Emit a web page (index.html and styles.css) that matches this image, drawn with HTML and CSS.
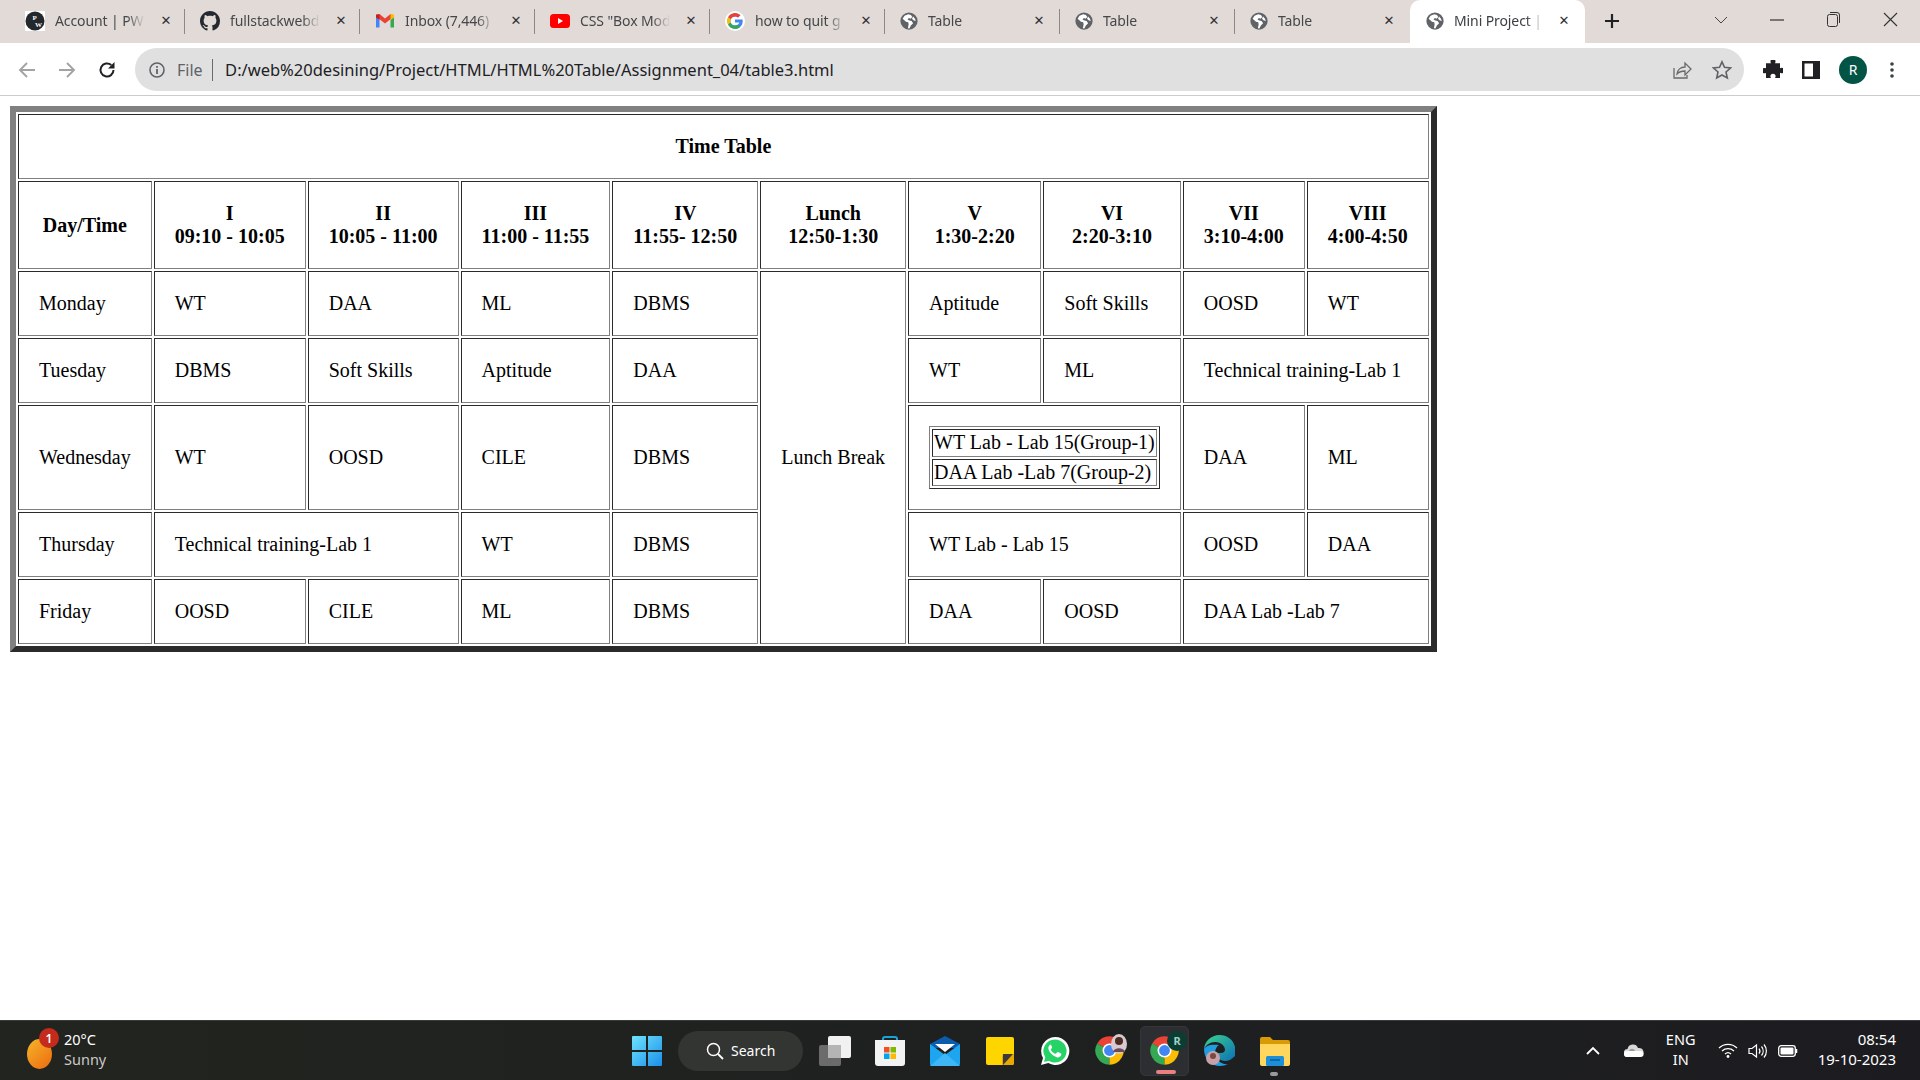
FILE: index.html
```html
<!DOCTYPE html>
<html lang="en">
<head>
<meta charset="utf-8">
<title>Mini Project</title>
<link rel="stylesheet" href="styles.css">
</head>
<body>
<svg class="defs" width="0" height="0">
  <symbol id="globe" viewBox="0 0 24 24">
    <circle cx="12" cy="12" r="11.5" fill="#5f6368"/>
    <path d="M11 3 6 5 3.5 9 8 13l3 .5.5 3-1 5 2 .5 2-4 3-3-2-3-4-1-1.500-1.500 2-1.500 2 1 2.500-2.500-2-2.500zM17.500 6l2.500 3 1 3-3-1-2-2z" fill="#fff"/>
  </symbol>
  <symbol id="chrome" viewBox="0 0 24 24">
    <path d="M12 12 2.470 6.500A11 11 0 0 1 21.530 6.500z" fill="#ea4335"/>
    <path d="M12 12 2.470 6.500A11 11 0 0 0 12 23z" fill="#34a853"/>
    <path d="M12 12 21.530 6.500A11 11 0 0 1 12 23z" fill="#fbbc04"/>
    <circle cx="12" cy="12" r="5.400" fill="#fff"/>
    <circle cx="12" cy="12" r="4.200" fill="#4285f4"/>
  </symbol>
</svg>

<div class="app">
  <header class="tabstrip">
    <div class="tab">
      <svg class="fav" width="20" height="20" viewBox="0 0 20 20"><rect width="20" height="20" fill="#fff"/><circle cx="10" cy="10" r="9.500" fill="#23282d"/><text x="7.500" y="9" class="pw">P</text><text x="10" y="16" class="pw">W</text></svg>
      <span class="title">Account | PW</span><span class="x">✕</span>
    </div>
    <div class="tab">
      <svg class="fav" width="20" height="20" viewBox="0 0 16 16"><path fill="#24292f" d="M8 0C3.580 0 0 3.580 0 8c0 3.540 2.290 6.530 5.470 7.590.4.070.55-.17.55-.38 0-.19-.01-.82-.01-1.490-2.010.37-2.530-.49-2.690-.94-.09-.23-.48-.94-.82-1.130-.28-.15-.68-.52-.01-.53.63-.01 1.080.58 1.230.82.72 1.210 1.870.87 2.330.66.07-.52.28-.87.51-1.070-1.780-.2-3.640-.89-3.640-3.950 0-.87.31-1.590.82-2.150-.08-.2-.36-1.020.08-2.120 0 0 .67-.21 2.200.82.64-.18 1.320-.27 2-.27.68 0 1.360.09 2 .27 1.530-1.040 2.200-.82 2.200-.82.44 1.100.16 1.920.08 2.120.51.56.82 1.270.82 2.150 0 3.070-1.870 3.750-3.650 3.950.29.25.54.73.54 1.480 0 1.070-.01 1.930-.01 2.200 0 .21.15.46.55.38A8.013 8.013 0 0 0 16 8c0-4.420-3.580-8-8-8z"/></svg>
      <span class="title">fullstackwebd</span><span class="x">✕</span>
    </div>
    <div class="tab">
      <svg class="fav" width="20" height="20" viewBox="0 0 20 20"><path d="M1 5v11.500h3.500V9z" fill="#4285f4"/><path d="M19 5v11.500h-3.500V9z" fill="#34a853"/><path d="M1 5.500 4.500 3 10 7.500 15.500 3 19 5.500 10 12.500z" fill="#ea4335"/><path d="M15.500 3 19 3.500V6.500L15.500 9z" fill="#fbbc04"/><path d="M1 3.500 4.500 3v6L1 6.500z" fill="#c5221f"/></svg>
      <span class="title">Inbox (7,446)</span><span class="x">✕</span>
    </div>
    <div class="tab">
      <svg class="fav" width="20" height="20" viewBox="0 0 20 20"><rect y="3" width="20" height="14" rx="3.500" fill="#f00"/><path d="M8 7v6l5-3z" fill="#fff"/></svg>
      <span class="title">CSS "Box Mod</span><span class="x">✕</span>
    </div>
    <div class="tab">
      <svg class="fav" width="20" height="20" viewBox="0 0 20 20"><circle cx="10" cy="10" r="10" fill="#fff"/><path d="M10 8.400v3.200h4.400c-.3 1.500-1.900 3-4.400 3a4.600 4.600 0 0 1 0-9.200c1.300 0 2.300.5 3 1.200l2.400-2.400A7.800 7.800 0 1 0 10 17.800c4.500 0 7.700-3.200 7.700-7.800l-.1-1.600z" fill="#4285f4"/><path d="M3.100 6.300 5.800 8.300A4.600 4.600 0 0 1 10 5.400c1.300 0 2.300.5 3 1.200l2.400-2.400A7.800 7.800 0 0 0 3.100 6.300z" fill="#ea4335"/><path d="M3 13.600 5.700 11.700A4.600 4.600 0 0 1 5.800 8.300L3.100 6.300a7.800 7.800 0 0 0-.1 7.300z" fill="#fbbc04"/><path d="M10 17.800c2.100 0 3.900-.7 5.200-1.900l-2.600-2.100c-.7.500-1.600.8-2.600.8a4.600 4.600 0 0 1-4.300-2.900L3 13.600a7.800 7.800 0 0 0 7 4.200z" fill="#34a853"/></svg>
      <span class="title">how to quit g</span><span class="x">✕</span>
    </div>
    <div class="tab"><svg class="fav" width="18" height="18"><use href="#globe"/></svg><span class="title">Table</span><span class="x">✕</span></div>
    <div class="tab"><svg class="fav" width="18" height="18"><use href="#globe"/></svg><span class="title">Table</span><span class="x">✕</span></div>
    <div class="tab tab-last"><svg class="fav" width="18" height="18"><use href="#globe"/></svg><span class="title">Table</span><span class="x">✕</span></div>
    <div class="tab tab-active"><svg class="fav" width="18" height="18"><use href="#globe"/></svg><span class="title">Mini Project |</span><span class="x">✕</span></div>
    <svg class="newtab" width="16" height="16" viewBox="0 0 16 16"><path d="M8 1v14M1 8h14" stroke="#202124" stroke-width="2.200"/></svg>
    <div class="winctl">
      <svg width="14" height="8" viewBox="0 0 14 8"><path d="M1 1l6 6 6-6" fill="none" stroke="#444" stroke-width="1"/></svg>
      <svg width="14" height="2" viewBox="0 0 14 2"><path d="M0 1h14" stroke="#333" stroke-width="1.200"/></svg>
      <svg width="13" height="15" viewBox="0 0 13 15"><rect x=".5" y="2.500" width="10" height="12" rx="2" fill="none" stroke="#333"/><path d="M3 .5h7a2.500 2.500 0 0 1 2.500 2.500v8" fill="none" stroke="#333"/></svg>
      <svg width="15" height="15" viewBox="0 0 15 15"><path d="M1 1l13 13M14 1 1 14" stroke="#333" stroke-width="1.100"/></svg>
    </div>
  </header>

  <nav class="toolbar">
    <div class="navbtns">
      <svg width="18" height="16" viewBox="0 0 18 16"><path d="M9 1 2 8l7 7M2 8h15" fill="none" stroke="#a3a3a3" stroke-width="1.900"/></svg>
      <svg width="18" height="16" viewBox="0 0 18 16"><path d="M9 1l7 7-7 7M16 8H1" fill="none" stroke="#a3a3a3" stroke-width="1.900"/></svg>
      <svg width="18" height="18" viewBox="0 0 18 18"><path d="M15.500 9A6.500 6.500 0 1 1 13.300 4.100" fill="none" stroke="#202124" stroke-width="2"/><path d="M16.500 1v6.500H10z" fill="#202124"/></svg>
    </div>
    <div class="omnibox">
      <svg class="info" width="16" height="16" viewBox="0 0 16 16"><circle cx="8" cy="8" r="7" fill="none" stroke="#5f6368" stroke-width="1.600"/><path d="M8 7v5M8 4v1.800" stroke="#5f6368" stroke-width="1.800"/></svg>
      <span class="scheme">File</span>
      <span class="url">D:/web%20desining/Project/HTML/HTML%20Table/Assignment_04/table3.html</span>
      <svg class="omni-ic" width="20" height="20" viewBox="0 0 20 20"><path d="M2 8v10h13v-3" fill="none" stroke="#6a6a6a" stroke-width="1.300"/><path d="M5 14c.5-4 3.500-7 8-7V3l6 6-6 6v-4c-3.500 0-6 1-8 3z" fill="none" stroke="#6a6a6a" stroke-width="1.300"/></svg>
      <svg class="omni-ic" width="20" height="20" viewBox="0 0 20 20"><path d="M10 1.800l2.500 5.500 6 .7-4.500 4 1.300 6L10 15l-5.300 3 1.300-6-4.500-4 6-.7z" fill="none" stroke="#5f6368" stroke-width="1.600"/></svg>
    </div>
    <div class="toolbtns">
      <svg width="20" height="20" viewBox="0 0 20 20"><path d="M7.500 1.500a2.500 2.500 0 0 1 5 0c0 .8-.3 1.300-.5 1.800h5v5c.5-.3 1-.5 1.500-.5a2.700 2.700 0 0 1 0 5.400c-.5 0-1-.2-1.500-.5v5.300h-5c.3-.6.600-1 .6-1.700a2.600 2.600 0 0 0-5.200 0c0 .7.300 1.100.6 1.700H3v-5c-.4.200-.8.300-1.300.3a2.700 2.700 0 0 1 0-5.400c.5 0 .9.100 1.300.300V3.300h5c-.3-.5-.5-1-.5-1.800z" fill="#202124"/></svg>
      <svg width="18" height="18" viewBox="0 0 18 18"><path fill-rule="evenodd" d="M0 0h18v18H0zM2.500 2.500v13H11v-13z" fill="#202124"/></svg>
      <span class="avatar">R</span>
      <svg class="dots" width="4" height="16" viewBox="0 0 4 16"><circle cx="2" cy="2" r="1.800" fill="#3c4043"/><circle cx="2" cy="8" r="1.800" fill="#3c4043"/><circle cx="2" cy="14" r="1.800" fill="#3c4043"/></svg>
    </div>
  </nav>

  <main class="page">
    <table class="timetable">
      <tr><th class="cell" colspan="10">Time Table</th></tr>
      <tr>
        <th class="cell">Day/Time</th>
        <th class="cell">I<br>09:10 - 10:05</th>
        <th class="cell">II<br>10:05 - 11:00</th>
        <th class="cell">III<br>11:00 - 11:55</th>
        <th class="cell">IV<br>11:55- 12:50</th>
        <th class="cell">Lunch<br>12:50-1:30</th>
        <th class="cell">V<br>1:30-2:20</th>
        <th class="cell">VI<br>2:20-3:10</th>
        <th class="cell">VII<br>3:10-4:00</th>
        <th class="cell">VIII<br>4:00-4:50</th>
      </tr>
      <tr>
        <td class="cell">Monday</td><td class="cell">WT</td><td class="cell">DAA</td><td class="cell">ML</td><td class="cell">DBMS</td>
        <td class="cell" rowspan="5">Lunch Break</td>
        <td class="cell">Aptitude</td><td class="cell">Soft Skills</td><td class="cell">OOSD</td><td class="cell">WT</td>
      </tr>
      <tr>
        <td class="cell">Tuesday</td><td class="cell">DBMS</td><td class="cell">Soft Skills</td><td class="cell">Aptitude</td><td class="cell">DAA</td>
        <td class="cell">WT</td><td class="cell">ML</td><td class="cell" colspan="2">Technical training-Lab 1</td>
      </tr>
      <tr>
        <td class="cell">Wednesday</td><td class="cell">WT</td><td class="cell">OOSD</td><td class="cell">CILE</td><td class="cell">DBMS</td>
        <td class="cell" colspan="2">
          <table class="inner">
            <tr><td class="inner-cell inner-first">WT Lab - Lab 15(Group-1)</td></tr>
            <tr><td class="inner-cell">DAA Lab -Lab 7(Group-2)</td></tr>
          </table>
        </td>
        <td class="cell">DAA</td><td class="cell">ML</td>
      </tr>
      <tr>
        <td class="cell">Thursday</td><td class="cell" colspan="2">Technical training-Lab 1</td><td class="cell">WT</td><td class="cell">DBMS</td>
        <td class="cell" colspan="2">WT Lab - Lab 15</td><td class="cell">OOSD</td><td class="cell">DAA</td>
      </tr>
      <tr>
        <td class="cell">Friday</td><td class="cell">OOSD</td><td class="cell">CILE</td><td class="cell">ML</td><td class="cell">DBMS</td>
        <td class="cell">DAA</td><td class="cell">OOSD</td><td class="cell" colspan="2">DAA Lab -Lab 7</td>
      </tr>
    </table>
  </main>

  <footer class="taskbar">
    <div class="weather">
      <span class="sun"></span><span class="badge">1</span>
      <div class="wtext"><span class="temp">20°C</span><span class="cond">Sunny</span></div>
    </div>
    <div class="apps">
      <span class="slot slot-win"><svg width="30" height="30" viewBox="0 0 30 30"><defs><linearGradient id="wg" x1="0" y1="0" x2="1" y2="1"><stop offset="0" stop-color="#6fe3fb"/><stop offset="1" stop-color="#1a8fea"/></linearGradient></defs><path d="M0 1a1 1 0 0 1 1-1h13v14H0zM16 0h13a1 1 0 0 1 1 1v13H16zM0 16h14v14H1a1 1 0 0 1-1-1zM16 16h14v13a1 1 0 0 1-1 1H16z" fill="url(#wg)"/></svg></span>
      <span class="search"><svg width="18" height="18" viewBox="0 0 18 18"><circle cx="7.500" cy="7.500" r="6" fill="none" stroke="#fff" stroke-width="1.500"/><path d="M12 12l5 5" stroke="#fff" stroke-width="1.800"/></svg>Search</span>
      <span class="slot"><svg width="32" height="30" viewBox="0 0 32 30"><rect y="9" width="22" height="21" rx="2" fill="#6b6b6b"/><rect x="9" width="23" height="22" rx="2" fill="#f1f1f1"/><rect x="9" y="9" width="13" height="13" fill="#b5b5b5"/></svg></span>
      <span class="slot"><svg width="30" height="30" viewBox="0 0 30 30"><path d="M8 5V3a2 2 0 0 1 2-2h10a2 2 0 0 1 2 2v2" fill="none" stroke="#19a3dc" stroke-width="2"/><path d="M0 4h30v23a3 3 0 0 1-3 3H3a3 3 0 0 1-3-3z" fill="#f3f3f3"/><rect x="9" y="11" width="5.500" height="5.500" fill="#f25022"/><rect x="15.500" y="11" width="5.500" height="5.500" fill="#7fba00"/><rect x="9" y="17.500" width="5.500" height="5.500" fill="#00a4ef"/><rect x="15.500" y="17.500" width="5.500" height="5.500" fill="#ffb900"/></svg></span>
      <span class="slot"><svg width="30" height="30" viewBox="0 0 30 30"><path d="M0 8 15 0l15 8v4H0z" fill="#0b5cad"/><path d="M0 8v20a2 2 0 0 0 2 2h26a2 2 0 0 0 2-2V8L15 19z" fill="#1ea5ef"/><path d="M5 8h20L15 16z" fill="#fff"/><path d="M0 30 15 17l15 13z" fill="#3fb6f5"/></svg></span>
      <span class="slot"><svg width="28" height="28" viewBox="0 0 28 28"><path d="M2 0h24a2 2 0 0 1 2 2v24a2 2 0 0 1-2 2H2a2 2 0 0 1-2-2V2a2 2 0 0 1 2-2z" fill="#ffd500"/><path d="M28 17H19a3 3 0 0 0-3 3v8h10a2 2 0 0 0 2-2z" fill="#e8a800"/><path d="M27 17H17v11z" fill="#3b3b3b"/></svg></span>
      <span class="slot"><svg width="30" height="30" viewBox="0 0 30 30"><path d="M15 1a14 14 0 0 0-12 21L1 29l7.300-1.900A14 14 0 1 0 15 1z" fill="#fff"/><path d="M15 3.500A11.500 11.500 0 0 0 5.300 21.300L4 26l4.900-1.300A11.500 11.500 0 1 0 15 3.500z" fill="#25d366"/><path d="M11 8.500c-.4 0-1 .2-1.500.8-.6.7-1.500 1.900-1 3.900.7 2.500 4 7 9 8.200 2 .3 3.500-1.200 3.700-2.300.1-.8.100-1.300 0-1.500l-3.200-1.600c-.5-.1-.8.100-1.100.6l-.8 1c-.3.300-.6.300-1 .1-1.800-.8-3.300-2.200-4.200-3.800-.2-.4 0-.6.200-.9l.8-1c.2-.3.200-.6.100-.9l-1.300-3c-.2-.5-.4-.6-.7-.6z" fill="#fff"/></svg></span>
      <span class="slot"><svg class="chrome-ic" width="31" height="31"><use href="#chrome"/></svg><svg class="photo" width="16" height="20" viewBox="0 0 16 20"><ellipse cx="8" cy="10" rx="8" ry="10" fill="#d8c8d0"/><circle cx="8" cy="7" r="4" fill="#4a2c20"/><path d="M2 18c1-5 11-5 12 0z" fill="#6b4a5a"/></svg></span>
      <span class="slot slot-active"><svg class="chrome-ic" width="31" height="31"><use href="#chrome"/></svg><span class="pbadge">R</span><span class="underline"></span></span>
      <span class="slot"><svg width="31" height="31" viewBox="0 0 31 31"><defs><linearGradient id="eg" x1="0" y1="0" x2="1" y2="1"><stop offset="0" stop-color="#3bd38e"/><stop offset="1" stop-color="#0c6fb8"/></linearGradient></defs><path d="M15.500 0C7 0 .5 6.500 0 14c2-4 6-7 11-7 6 0 10 4 10 8 0 2-2 3-4 3h-5c0 4 4 8 9 8 4 0 7-2 10-5 .5-2 .5-4 .5-6C31 6 24 0 15.500 0z" fill="url(#eg)"/><path d="M0 14c0 9 6 17 16 17 3 0 6-1 8-2-6 1-13-4-13-11 0-4 2-7 4-8-7-1-13 0-15 4z" fill="#1f9de0"/><circle cx="9" cy="23" r="7" fill="#c8a0a8"/><circle cx="9" cy="21" r="3" fill="#7a4a40"/></svg></span>
      <span class="slot"><svg width="30" height="30" viewBox="0 0 30 30"><path d="M0 3a2 2 0 0 1 2-2h8l3 3h15a2 2 0 0 1 2 2v3H0z" fill="#d99a06"/><path d="M0 8h30v20a2 2 0 0 1-2 2H2a2 2 0 0 1-2-2z" fill="#ffd75e"/><rect x="6" y="20" width="18" height="10" rx="1.500" fill="#1d8fd8"/><path d="M10 24h10" stroke="#0b5c96" stroke-width="1.500"/></svg><span class="rundot"></span></span>
    </div>
    <div class="tray">
      <svg class="t-chev" width="14" height="9" viewBox="0 0 14 9"><path d="M1 8l6-6 6 6" fill="none" stroke="#fff" stroke-width="1.800"/></svg>
      <svg class="t-cloud" width="20" height="13" viewBox="0 0 20 13"><path d="M4 13a4 4 0 0 1-.5-8A5.500 5.500 0 0 1 14 4a4.500 4.500 0 0 1 2 9z" fill="#d8d8d8"/><path d="M3 13a3 3 0 0 1 0-6h13a3 3 0 0 1 1 6z" fill="#fff"/><path d="M5 7c1-3 5-3 6 0z" fill="#9a9a9a"/></svg>
      <span class="lang">ENG<br>IN</span>
      <svg class="t-wifi" width="20" height="15" viewBox="0 0 20 15"><path d="M1 5a13 13 0 0 1 18 0M4 8a9 9 0 0 1 12 0M7 11a4.500 4.500 0 0 1 6 0" fill="none" stroke="#fff" stroke-width="1.300"/><circle cx="10" cy="13.500" r="1.400" fill="#fff"/></svg>
      <svg class="t-vol" width="20" height="16" viewBox="0 0 20 16"><path d="M1 5.500h3L8.500 2v12L4 10.500H1z" fill="none" stroke="#fff" stroke-width="1.200"/><path d="M11 5.500a4 4 0 0 1 0 5M13.500 3.500a7 7 0 0 1 0 9M16 1.500a10 10 0 0 1 0 13" fill="none" stroke="#fff" stroke-width="1.200"/></svg>
      <svg class="t-bat" width="20" height="12" viewBox="0 0 20 12"><rect x=".7" y=".7" width="16.600" height="10.600" rx="2.500" fill="none" stroke="#fff" stroke-width="1.300"/><rect x="2.500" y="2.500" width="13" height="7" rx="1" fill="#fff"/><path d="M18.500 4v4" stroke="#fff" stroke-width="1.500"/></svg>
      <div class="clock"><span>08:54</span><span>19-10-2023</span></div>
    </div>
  </footer>
</div>
</body>
</html>
```

FILE: styles.css
```css
* { box-sizing: border-box; }
html, body { margin: 0; padding: 0; height: 100%; }
body { overflow: hidden; background: #fff; font-family: "Noto Sans", "Open Sans", sans-serif; }
.defs { position: absolute; }
.app { display: flex; flex-direction: column; height: 1080px; }

/* tab strip */
.tabstrip { height: 43px; flex: none; display: flex; align-items: stretch; padding-left: 10px; background: #e2dad7; }
.tab { width: 175px; flex: none; display: flex; align-items: center; padding: 0 0 2px 15px; position: relative; color: #45474a; font-size: 14px; }
.tab::after { content: ""; position: absolute; right: 0; top: 9px; width: 1px; height: 25px; background: #8c8886; }
.tab-last::after, .tab-active::after { display: none; }
.fav { flex: none; }
.tab .title { width: 90px; margin-left: 10px; overflow: hidden; white-space: nowrap; letter-spacing: -.1px; -webkit-mask-image: linear-gradient(90deg, #000 80%, transparent 100%); mask-image: linear-gradient(90deg, #000 80%, transparent 100%); }
.tab .x { margin-left: 14px; width: 14px; font-size: 13px; font-weight: 700; color: #303134; text-align: center; font-family: "DejaVu Sans", sans-serif; }
.tab-active { background: #fff; border-radius: 10px 10px 0 0; padding-left: 16px; color: #3c4043; }
.tab-active .x { margin-left: 13px; }
.pw { font: 700 7px "Liberation Serif", serif; fill: #fff; }
.newtab { align-self: center; margin-left: 19px; margin-bottom: 2px; }
.winctl { margin-left: auto; display: flex; align-items: center; padding-bottom: 4px; }
.winctl svg { margin-right: 43px; }
.winctl svg:first-child { margin-right: 42px; }
.winctl svg:last-child { margin-right: 22px; }

/* toolbar */
.toolbar { height: 53px; flex: none; display: flex; align-items: flex-start; background: #fff; border-bottom: 1px solid #ccc; padding-top: 5px; }
.navbtns { width: 135px; height: 43px; display: flex; align-items: center; gap: 22px; padding-left: 18px; }
.omnibox { width: 1609px; height: 43px; flex: none; display: flex; align-items: center; background: #e0e0e0; border-radius: 22px; padding-left: 14px; color: #202124; }
.scheme { margin-left: 12px; font-size: 16px; color: #5f6368; padding-right: 9px; border-right: 1px solid #6a6a6a; line-height: 22px; }
.url { margin-left: 12.500px; font-size: 16.500px; white-space: nowrap; flex: 1; }
.omni-ic { flex: none; margin-right: 20px; }
.omni-ic:last-child { margin-right: 12px; }
.toolbtns { display: flex; align-items: center; height: 43px; padding-left: 19px; gap: 19px; }
.dots { margin-left: 4px; }
.avatar { width: 28px; height: 28px; border-radius: 50%; background: #045445; color: #fff; font-size: 14px; display: flex; align-items: center; justify-content: center; }

/* page */
.page { flex: 1; padding: 10px; background: #fff; min-height: 0; }
.timetable { border-style: solid; border-width: 6px; border-color: #808080 #2b2b2b #2b2b2b #808080; border-spacing: 2px; font-family: "Liberation Serif", "Times New Roman", serif; font-size: 20px; color: #000; white-space: nowrap; }
.cell { border: 1px solid; border-color: #2b2b2b #808080 #808080 #2b2b2b; padding: 20px; text-align: left; }
th.cell { text-align: center; font-weight: 700; }
.inner { border: 1px solid; border-color: #808080 #2b2b2b #2b2b2b #808080; border-spacing: 2px; }
.inner-cell { border: 1px solid; border-color: #2b2b2b #808080 #808080 #2b2b2b; padding: 1px; }
.inner-first { padding-bottom: 2px; }

/* taskbar */
.taskbar { height: 60px; flex: none; display: grid; grid-template-columns: 632px auto 1fr; align-items: center; background: linear-gradient(90deg, #22241f 0%, #1f2120 45%, #1c1c20 100%); border-top: 1px solid #3a3a3a; color: #fff; font-size: 14px; }
.weather { display: flex; align-items: center; padding-left: 27px; position: relative; height: 100%; }
.sun { width: 25px; height: 30px; margin-top: 6px; border-radius: 50%; background: linear-gradient(135deg, #f4b52a, #ee6a0e); }
.badge { position: absolute; left: 39px; top: 7px; width: 20px; height: 20px; border-radius: 50%; background: #c42b1c; color: #fff; font-size: 12px; font-weight: 600; display: flex; align-items: center; justify-content: center; }
.wtext { display: flex; flex-direction: column; margin: -3px 0 0 12px; line-height: 20px; font-size: 14.500px; }
.temp { color: #fff; }
.cond { color: #c9c9c9; }
.apps { display: flex; align-items: center; height: 100%; }
.slot { position: relative; width: 55px; height: 50px; display: flex; align-items: center; justify-content: center; }
.slot-win { width: 30px; margin-right: 16px; }
.search { width: 125px; height: 40px; margin-right: 4px; border-radius: 20px; background: #333532; display: flex; align-items: center; gap: 7px; padding-left: 28px; font-size: 14px; }
.slot-active { background: #2c2e31; border-radius: 5px; border: 1px solid #34363a; width: 49px; margin: 0 3px; }
.photo { position: absolute; right: 10px; top: 8px; }
.pbadge { position: absolute; right: 1px; top: 4px; width: 20px; height: 20px; border-radius: 50%; background: #0b3d34; color: #9fd3c4; font-size: 11px; font-weight: 700; display: flex; align-items: center; justify-content: center; }
.underline { position: absolute; left: 15px; bottom: 1px; width: 20px; height: 4px; border-radius: 2px; background: #e88080; }
.rundot { position: absolute; left: 23px; bottom: 0; width: 8px; height: 4px; border-radius: 2px; background: #9a9a9a; }
.tray { display: flex; align-items: center; justify-content: flex-end; padding-right: 24px; height: 100%; }
.lang { width: 40px; margin: -3px 0 0 17px; text-align: center; line-height: 20px; font-size: 14.500px; }
.t-cloud { margin-left: 24px; }
.t-wifi { margin-left: 17px; }
.t-vol { margin-left: 10px; }
.t-bat { margin-left: 10px; }
.clock { display: flex; flex-direction: column; align-items: flex-end; margin: -3px 0 0 20px; line-height: 20px; font-size: 15px; }
```
